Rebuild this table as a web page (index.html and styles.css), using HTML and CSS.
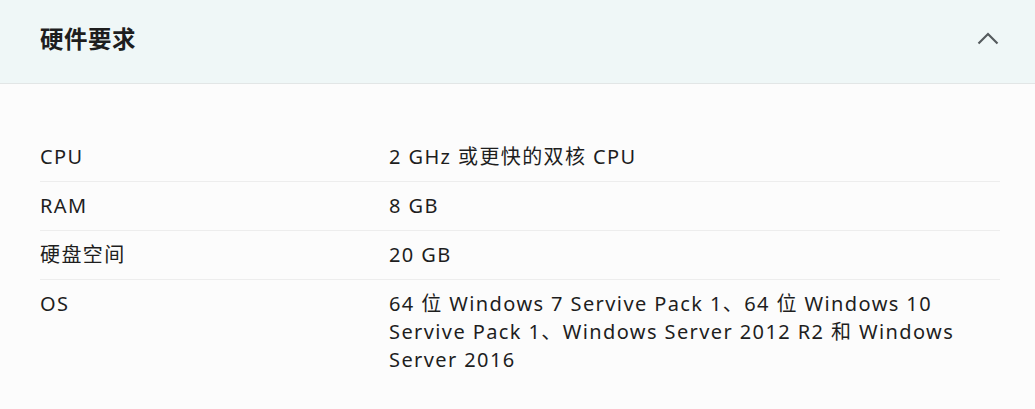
FILE: index.html
```html
<!DOCTYPE html>
<html lang="zh-CN">
<head>
<meta charset="utf-8">
<link rel="stylesheet" href="styles.css">
</head>
<body>
<section class="panel">
  <header class="panel-head">
    <h2 class="panel-title">硬件要求</h2>
    <svg class="chevron" width="22" height="13" viewBox="0 0 22 13" aria-hidden="true">
      <path d="M1.5 11.5 L11 2 L20.5 11.5" fill="none" stroke="#555b5e" stroke-width="2.2"/>
    </svg>
  </header>
  <div class="panel-body">
    <div class="spec-row">
      <div class="spec-label">CPU</div>
      <div class="spec-value">2 GHz 或更快的双核 CPU</div>
    </div>
    <div class="spec-row">
      <div class="spec-label">RAM</div>
      <div class="spec-value">8 GB</div>
    </div>
    <div class="spec-row">
      <div class="spec-label">硬盘空间</div>
      <div class="spec-value">20 GB</div>
    </div>
    <div class="spec-row">
      <div class="spec-label">OS</div>
      <div class="spec-value">64 位 Windows 7 Servive Pack 1、64 位 Windows 10 Servive Pack 1、Windows Server 2012 R2 和 Windows Server 2016</div>
    </div>
  </div>
</section>
</body>
</html>
```

FILE: styles.css
```css
html, body {
  margin: 0;
  padding: 0;
  background: #fcfcfc;
}
body {
  font-family: "Noto Sans", "Noto Sans CJK SC", sans-serif;
  color: #1e1e1e;
}
.panel-head {
  height: 83px;
  background: #eff7f7;
  border-bottom: 1px solid #e2e6e6;
  display: flex;
  align-items: center;
  justify-content: space-between;
  padding: 0 36px 0 40px;
}
.panel-title {
  margin: -5px 0 0;
  font-size: 23.5px;
  line-height: 32px;
  font-weight: 700;
  letter-spacing: 0.5px;
  color: #1e1e1e;
}
.chevron {
  display: block;
  margin-top: -6px;
}
.panel-body {
  padding: 49px 35px 0 40px;
}
.spec-row {
  display: grid;
  grid-template-columns: 349px 1fr;
  padding: 10px 0;
  line-height: 28px;
  font-size: 20px;
  letter-spacing: 1.4px;
  border-bottom: 1px solid #ededed;
}
.spec-row:last-child {
  border-bottom: none;
}
.spec-value {
  max-width: 575px;
}
```
